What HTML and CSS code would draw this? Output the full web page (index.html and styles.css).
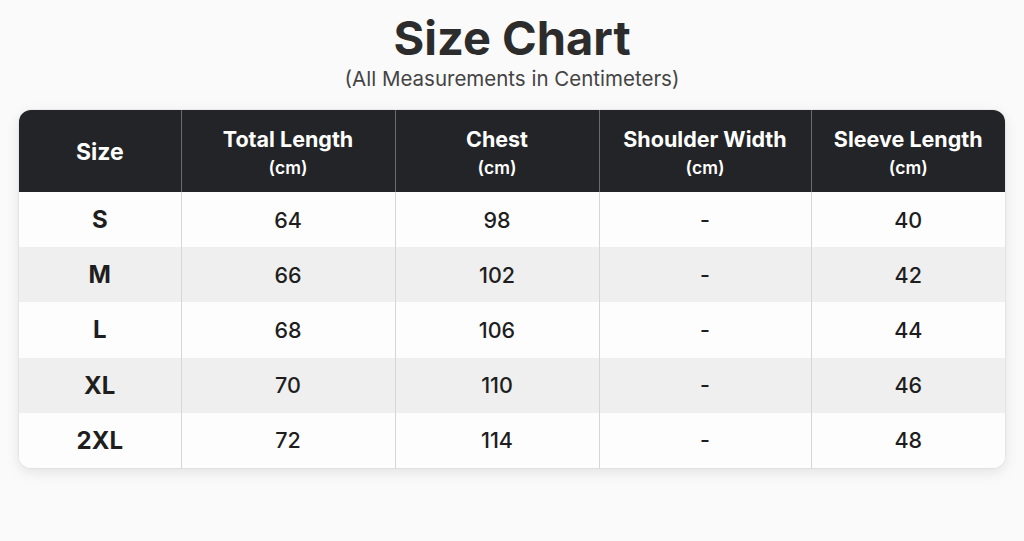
FILE: index.html
```html
<!DOCTYPE html>
<html>
<head>
<meta charset="utf-8">
<link rel="stylesheet" href="styles.css">
</head>
<body>
<div class="page">
  <h1 class="title">Size Chart</h1>
  <p class="subtitle">(All Measurements in Centimeters)</p>
  <div class="card">
    <table class="chart">
      <colgroup>
        <col class="c1"><col class="c2"><col class="c3"><col class="c4"><col class="c5">
      </colgroup>
      <thead>
        <tr>
          <th class="size-h">Size</th>
          <th>Total Length<span class="unit">(cm)</span></th>
          <th>Chest<span class="unit">(cm)</span></th>
          <th>Shoulder Width<span class="unit">(cm)</span></th>
          <th>Sleeve Length<span class="unit">(cm)</span></th>
        </tr>
      </thead>
      <tbody>
        <tr><td class="sz">S</td><td>64</td><td>98</td><td>-</td><td>40</td></tr>
        <tr><td class="sz">M</td><td>66</td><td>102</td><td>-</td><td>42</td></tr>
        <tr><td class="sz">L</td><td>68</td><td>106</td><td>-</td><td>44</td></tr>
        <tr><td class="sz">XL</td><td>70</td><td>110</td><td>-</td><td>46</td></tr>
        <tr><td class="sz">2XL</td><td>72</td><td>114</td><td>-</td><td>48</td></tr>
      </tbody>
    </table>
  </div>
</div>
</body>
</html>
```
FILE: styles.css
```css
* { box-sizing: border-box; }
html, body { margin: 0; padding: 0; }
body {
  background: #fafafa;
  font-family: "Inter", "Open Sans", sans-serif;
  color: #1f1f1f;
  width: 1024px;
  height: 541px;
  overflow: hidden;
}
.page {
  display: flex;
  flex-direction: column;
  align-items: center;
  padding-top: 10px;
}
.title {
  margin: 0;
  font-size: 47px;
  font-weight: 700;
  line-height: 56px;
  color: #2c2c2c;
  letter-spacing: 0;
}
.subtitle {
  margin: 0;
  font-size: 20.5px;
  line-height: 26px;
  color: #444;
}
.card {
  margin-top: 18px;
  width: 986px;
  border-radius: 12px;
  overflow: hidden;
  background: #fdfdfd;
  box-shadow: 0 4px 14px rgba(0,0,0,0.10), 0 0 0 1px rgba(0,0,0,0.04);
}
.chart {
  width: 100%;
  border-collapse: collapse;
  table-layout: fixed;
}
.c1 { width: 162px; }
.c2 { width: 214px; }
.c3 { width: 204px; }
.c4 { width: 212px; }
.c5 { width: 194px; }
.chart th {
  background: #232427;
  color: #fff;
  font-weight: 700;
  font-size: 21.5px;
  line-height: 28px;
  height: 82px;
  padding: 6px 0 0;
  text-align: center;
  vertical-align: middle;
  border-left: 1px solid #6a6a6a;
}
.chart th:first-child, .chart td:first-child { border-left: none; }
.chart th .unit {
  display: block;
  font-size: 17.5px;
  line-height: 30px;
  font-weight: 600;
}
.chart th.size-h { font-size: 23px; padding-top: 2px; }
.chart td {
  height: 55.2px;
  padding: 0;
  text-align: center;
  vertical-align: middle;
  font-size: 21.5px;
  font-weight: 500;
  color: #1e1e1e;
  border-left: 1px solid #d6d6d6;
}
.chart tbody tr:nth-child(odd) td { background: #fdfdfd; }
.chart tbody tr:nth-child(even) td { background: #efefef; }
.chart td.sz { font-weight: 700; font-size: 24px; }
```
